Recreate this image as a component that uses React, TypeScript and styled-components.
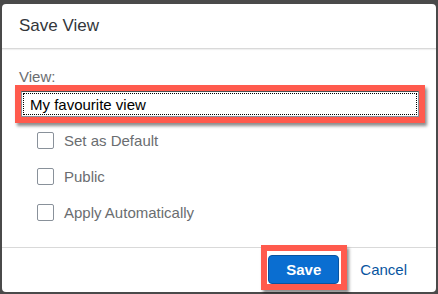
import React, { useState } from 'react';
import styled, { createGlobalStyle } from 'styled-components';

const GlobalStyle = createGlobalStyle`
    html, body {
        margin: 0;
        padding: 0;
        background: #4a4a4a;
        font-family: "Liberation Sans", Arial, sans-serif;
    }
`;

const Backdrop = styled.div`
    width: 438px;
    height: 294px;
    box-sizing: border-box;
    padding: 4px 2px 2px 2px;
    background: #4a4a4a;
    overflow: hidden;
`;

const Dialog = styled.div`
    height: 100%;
    background: #ffffff;
    border-radius: 4px;
    display: flex;
    flex-direction: column;
`;

const Header = styled.div`
    height: 44px;
    flex: none;
    display: flex;
    align-items: center;
    padding-left: 17px;
    font-size: 17px;
    color: #32363a;
    border-bottom: 1px solid #d9d9d9;
    box-shadow: 0 1px 1px rgba(0, 0, 0, 0.06);
`;

const Content = styled.div`
    flex: 1;
    padding: 19px 11px 0 13px;
    display: flex;
    flex-direction: column;
`;

const Label = styled.label`
    font-size: 15px;
    line-height: 17px;
    color: #6a6d70;
    margin-left: 4px;
`;

const Highlight = styled.div<{ thick: number }>`
    border: ${props => props.thick + "px"} solid #ff5a4d;
    box-shadow: 2px 3px 3px rgba(0, 0, 0, 0.45);
    background: #ffffff;
`;

const Input = styled.input`
    display: block;
    width: 100%;
    box-sizing: border-box;
    height: 26px;
    border: 1px solid #89919a;
    border-top-color: #4f4f4f;
    outline: 1px dotted #000000;
    outline-offset: -3px;
    padding: 0 8px;
    font-family: "Liberation Sans", Arial, sans-serif;
    font-size: 15px;
    color: #000000;
    background: #ffffff;
`;

const Options = styled.div`
    display: flex;
    flex-direction: column;
    gap: 19px;
    margin-top: 9px;
    padding-left: 22px;
`;

const Row = styled.label`
    display: flex;
    align-items: center;
    gap: 10px;
    height: 17px;
    font-size: 15px;
    color: #6a6d70;
    cursor: pointer;
`;

const Box = styled.span<{ checked: boolean }>`
    width: 17px;
    height: 17px;
    box-sizing: border-box;
    border: 1px solid #89919a;
    border-radius: 2px;
    background: #ffffff;
    display: flex;
    align-items: center;
    justify-content: center;
    color: #0a6ed1;
    font-size: 12px;
`;

const Footer = styled.div`
    height: 44px;
    flex: none;
    border-top: 1px solid #d9d9d9;
    display: flex;
    justify-content: flex-end;
    align-items: flex-start;
    padding-right: 29px;
    gap: 13px;
`;

const SaveHighlight = styled(Highlight)`
    margin-top: -3px;
    padding: 4px 2px 0 1px;
    height: 29px;
`;

const PrimaryButton = styled.button`
    display: block;
    width: 71px;
    height: 29px;
    border: 1px solid #0854a0;
    border-radius: 4px;
    background: #0a6ed1;
    color: #ffffff;
    font-family: "Liberation Sans", Arial, sans-serif;
    font-size: 15px;
    font-weight: bold;
    cursor: pointer;
`;

const LinkButton = styled.button`
    margin-top: 7px;
    height: 29px;
    border: none;
    background: none;
    padding: 0;
    color: #0854a0;
    font-family: "Liberation Sans", Arial, sans-serif;
    font-size: 15px;
    cursor: pointer;
`;

const options = ["Set as Default", "Public", "Apply Automatically"];

const App: React.FC = () => {
    const [name, setName] = useState("My favourite view");
    const [checked, setChecked] = useState<boolean[]>([false, false, false]);

    return (
        <>
            <GlobalStyle />
            <Backdrop>
                <Dialog>
                    <Header>Save View</Header>
                    <Content>
                        <Label>View:</Label>
                        <Highlight thick={6}>
                            <Input value={name} onChange={e => setName(e.target.value)} />
                        </Highlight>
                        <Options>
                            {options.map((o, i) => (
                                <Row key={o} onClick={() => setChecked(checked.map((c, j) => j === i ? !c : c))}>
                                    <Box checked={checked[i]}>{checked[i] ? "✓" : ""}</Box>
                                    {o}
                                </Row>
                            ))}
                        </Options>
                    </Content>
                    <Footer>
                        <SaveHighlight thick={6}>
                            <PrimaryButton>Save</PrimaryButton>
                        </SaveHighlight>
                        <LinkButton>Cancel</LinkButton>
                    </Footer>
                </Dialog>
            </Backdrop>
        </>
    );
};

export default App;
